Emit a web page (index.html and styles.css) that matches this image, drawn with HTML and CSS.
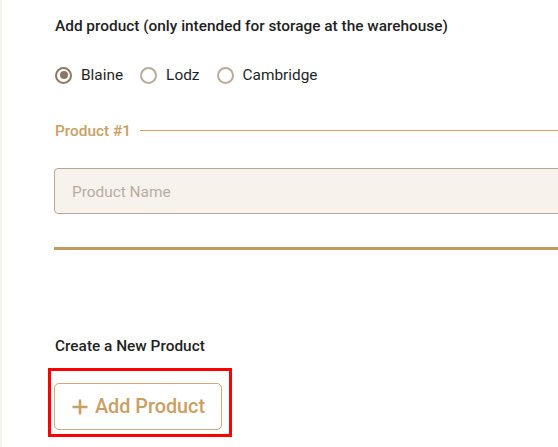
FILE: index.html
```html
<!DOCTYPE html>
<html>
<head>
<meta charset="utf-8">
<link rel="stylesheet" href="styles.css">
</head>
<body>
<div class="page">
  <div class="strip"></div>
  <main class="content">
    <div class="title">Add product (only intended for storage at the warehouse)</div>
    <div class="radios">
      <label class="radio"><span class="circle checked"></span><span>Blaine</span></label>
      <label class="radio"><span class="circle"></span><span>Lodz</span></label>
      <label class="radio"><span class="circle"></span><span>Cambridge</span></label>
    </div>
    <div class="legend"><span class="legend-text">Product #1</span><span class="legend-line"></span></div>
    <div class="input"><span class="placeholder">Product Name</span></div>
    <div class="bar"></div>
    <div class="title create">Create a New Product</div>
    <div class="btn-wrap">
      <button class="btn">
        <svg class="plus" width="16" height="16" viewBox="0 0 16 16"><path d="M8 0.5V15.5M0.5 8H15.5" stroke="#c9a063" stroke-width="2.6" fill="none"/></svg>
        <span>Add Product</span>
      </button>
      <div class="highlight"></div>
    </div>
  </main>
</div>
</body>
</html>
```
FILE: styles.css
```css
html, body {
  margin: 0;
  padding: 0;
  background: #ffffff;
  overflow: hidden;
}
.page {
  display: flex;
  width: 800px;
  height: 447px;
  font-family: Roboto, "Liberation Sans", sans-serif;
  color: #1f1f1f;
}
.strip {
  width: 2px;
  background: #f6f2eb;
  flex: none;
}
.content {
  flex: 1;
  padding-left: 53px;
}
.title {
  margin-top: 16px;
  font-size: 15.4px;
  line-height: 20px;
  font-weight: 500;
}
.radios {
  display: flex;
  margin-top: 29px;
  height: 20px;
  align-items: center;
  font-size: 15.4px;
  gap: 17px;
}
.radio {
  display: flex;
  align-items: center;
  gap: 9px;
}
.circle {
  width: 13px;
  height: 13px;
  border: 2px solid #b9aa9a;
  border-radius: 50%;
  position: relative;
  box-sizing: content-box;
}
.circle.checked {
  border-color: #8c7965;
}
.circle.checked::after {
  content: "";
  position: absolute;
  left: 2.5px;
  top: 2.5px;
  width: 8px;
  height: 8px;
  border-radius: 50%;
  background: #8c7965;
}
.legend {
  display: flex;
  align-items: center;
  margin-top: 36px;
  height: 20px;
}
.legend-text {
  font-size: 15.4px;
  font-weight: 500;
  color: #c9a063;
}
.legend-line {
  flex: 1;
  height: 1px;
  background: #cda263;
  margin-left: 9px;
  margin-top: -1px;
}
.input {
  margin-top: 27px;
  height: 44px;
  border: 1px solid #b6a894;
  border-radius: 4px;
  background: #f7f3ec;
  display: flex;
  align-items: center;
  padding-left: 17px;
  margin-left: -1px;
}
.placeholder {
  font-size: 15.4px;
  color: #b8aca2;
  padding-top: 2px;
}
.bar {
  margin-top: 33px;
  height: 3px;
  background: #c39a5f;
  margin-left: -1px;
}
.create {
  margin-top: 86px;
}
.btn-wrap {
  position: relative;
  margin-top: 27px;
  margin-left: -1px;
  width: 168px;
}
.btn {
  display: flex;
  align-items: center;
  gap: 7px;
  width: 168px;
  height: 47px;
  box-sizing: border-box;
  border: 1px solid #d1aa76;
  border-radius: 5px;
  background: #ffffff;
  padding: 0 0 0 17px;
  font-family: Roboto, "Liberation Sans", sans-serif;
  font-size: 19.8px;
  font-weight: 500;
  color: #c9a063;
}
.highlight {
  position: absolute;
  left: -6px;
  top: -15px;
  width: 178px;
  height: 63px;
  border: 3px solid #ff0000;
}
```
